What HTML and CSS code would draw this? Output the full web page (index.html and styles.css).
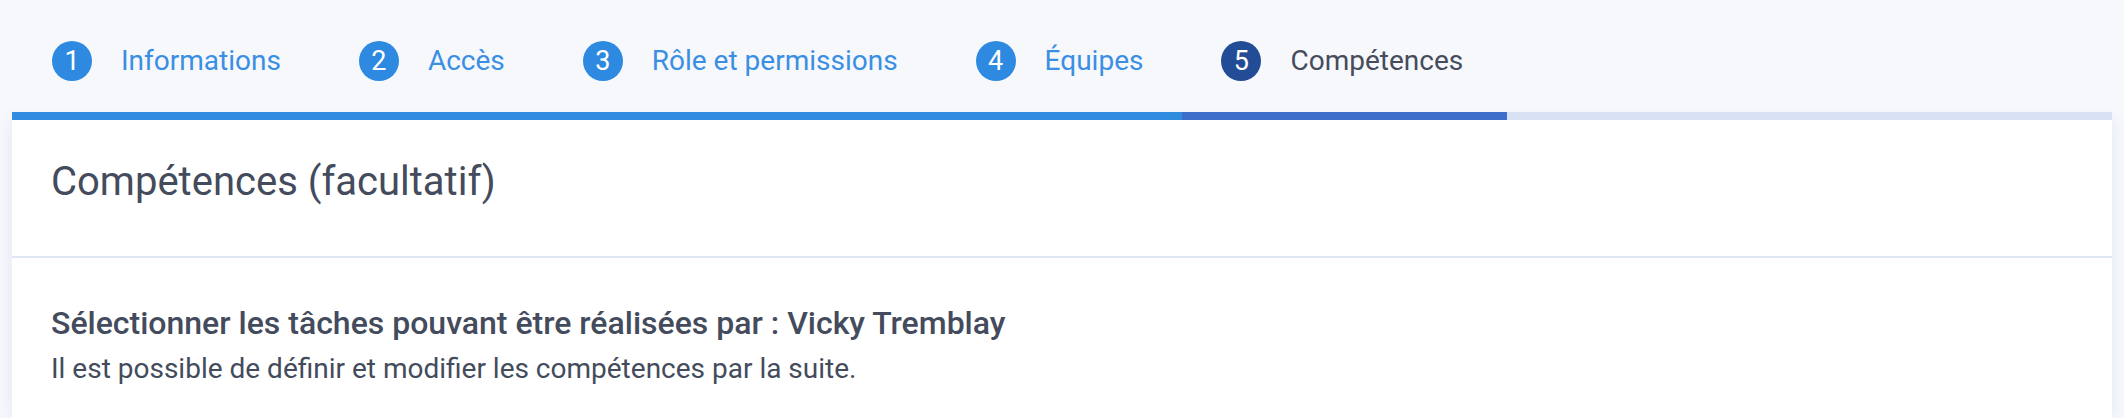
FILE: index.html
```html
<!DOCTYPE html>
<html lang="fr">
<head>
  <meta charset="UTF-8" />
  <meta name="viewport" content="width=device-width, initial-scale=1.0" />
  <title>Nouvel utilisateur - Compétences</title>
  <link rel="stylesheet" href="styles.css">
</head>
<body>
  <div class="wizard">
    <nav class="steps">
      <div class="step done"><span class="num">1</span><span class="label">Informations</span></div>
      <div class="step done"><span class="num">2</span><span class="label">Accès</span></div>
      <div class="step done"><span class="num">3</span><span class="label">Rôle et permissions</span></div>
      <div class="step done"><span class="num">4</span><span class="label">Équipes</span></div>
      <div class="step active"><span class="num">5</span><span class="label">Compétences</span></div>
      <div class="steps-rest"></div>
    </nav>

    <section class="card">
      <header class="card-head">
        <h2>Compétences (facultatif)</h2>
      </header>
      <div class="card-body">
        <h3>Sélectionner les tâches pouvant être réalisées par : Vicky Tremblay</h3>
        <p>Il est possible de définir et modifier les compétences par la suite.</p>
      </div>
    </section>
  </div>
</body>
</html>
```

FILE: styles.css
```css
body {
  font-family: Roboto, "Liberation Sans", Arial, sans-serif;
  margin: 0;
  padding: 0;
  background: #f7f8fc;
  color: #434b5c;
}
.wizard {
  padding: 0 12px;
}
.steps {
  display: flex;
}
.step {
  display: flex;
  align-items: center;
  padding: 41px 39px 31px;
  border-bottom: 8px solid #318ce0;
}
.step:first-child {
  padding-left: 40px;
}
.step .num {
  width: 40px;
  height: 40px;
  border-radius: 50%;
  background: #2e8ae0;
  color: #fff;
  font-size: 27px;
  line-height: 40px;
  text-align: center;
}
.step .label {
  margin-left: 29px;
  font-size: 28px;
  line-height: 40px;
  color: #3a8fe3;
}
.step.active {
  padding-right: 44px;
  border-bottom-color: #3d6ec9;
}
.step.active .num {
  background: #224d96;
}
.step.active .label {
  color: #464c5b;
}
.steps-rest {
  flex: 1;
  border-bottom: 8px solid #d9e1f4;
}
.card {
  background: #fff;
  min-height: 298px;
  box-shadow: 0 0 14px rgba(70, 100, 200, 0.12);
}
.card-head {
  box-sizing: border-box;
  height: 138px;
  display: flex;
  align-items: center;
  padding: 0 39px 13px;
  border-bottom: 2px solid #dfe6f5;
}
.card-head h2 {
  margin: 0;
  font-size: 40px;
  font-weight: 400;
  color: #434b5c;
}
.card-body {
  padding: 47px 39px 0;
}
.card-body h3 {
  margin: 0;
  font-size: 32px;
  line-height: 36px;
  font-weight: 500;
}
.card-body p {
  margin: 10px 0 0;
  font-size: 28px;
  line-height: 36px;
}
```
